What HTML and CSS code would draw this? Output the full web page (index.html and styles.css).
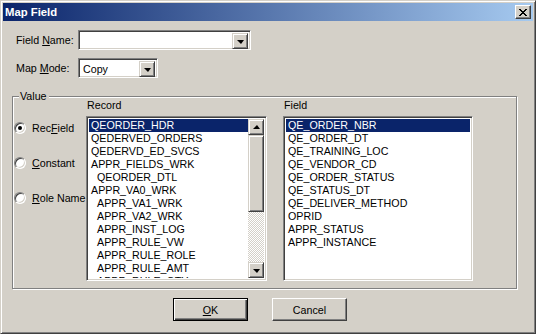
FILE: index.html
```html
<!DOCTYPE html>
<html lang="en">
<head>
  <meta charset="UTF-8">
  <title>Map Field</title>
  <link rel="stylesheet" href="styles.css">
</head>
<body>

  <div class="window">
    <div class="titlebar">
      <span class="title">Map Field</span>
      <button class="close">
        <svg width="8" height="7" viewBox="0 0 8 7" shape-rendering="crispEdges">
          <path d="M0 0h2v1h1v1h2v-1h1v-1h2v1h-1v1h-1v1h-1v1h1v1h1v1h1v1h-2v-1h-1v-1h-2v1h-1v1h-2v-1h1v-1h1v-1h1v-1h-1v-1h-1z" fill="#000"/>
        </svg>
      </button>
    </div>

    <div class="content">
      <div class="row">
        <label class="lbl">Field <u>N</u>ame:</label>
        <div class="combo combo-name">
          <span class="combo-text"></span>
          <span class="drop"><i class="arrow-down"></i></span>
        </div>
      </div>
      <div class="row">
        <label class="lbl">Map <u>M</u>ode:</label>
        <div class="combo combo-mode">
          <span class="combo-text">Copy</span>
          <span class="drop"><i class="arrow-down"></i></span>
        </div>
      </div>

      <div class="group">
        <span class="legend">Value</span>

        <div class="radios">
          <div class="radio checked"><span class="dot"></span><span>Rec<u>F</u>ield</span></div>
          <div class="radio"><span class="dot"></span><span><u>C</u>onstant</span></div>
          <div class="radio"><span class="dot"></span><span><u>R</u>ole Name</span></div>
        </div>

        <div class="col col-record">
          <div class="col-head">Record</div>
          <div class="listbox">
            <ul class="items">
              <li class="sel">QEORDER_HDR</li>
              <li>QEDERVED_ORDERS</li>
              <li>QEDERVD_ED_SVCS</li>
              <li>APPR_FIELDS_WRK</li>
              <li class="indent">QEORDER_DTL</li>
              <li>APPR_VA0_WRK</li>
              <li class="indent">APPR_VA1_WRK</li>
              <li class="indent">APPR_VA2_WRK</li>
              <li class="indent">APPR_INST_LOG</li>
              <li class="indent">APPR_RULE_VW</li>
              <li class="indent">APPR_RULE_ROLE</li>
              <li class="indent">APPR_RULE_AMT</li>
              <li class="indent">APPR_RULE_QTY</li>
            </ul>
            <div class="scrollbar">
              <span class="sb-btn"><i class="arrow-up"></i></span>
              <span class="thumb"></span>
              <span class="track"></span>
              <span class="sb-btn"><i class="arrow-down"></i></span>
            </div>
          </div>
        </div>

        <div class="col col-field">
          <div class="col-head">Field</div>
          <div class="listbox">
            <ul class="items">
              <li class="sel">QE_ORDER_NBR</li>
              <li>QE_ORDER_DT</li>
              <li>QE_TRAINING_LOC</li>
              <li>QE_VENDOR_CD</li>
              <li>QE_ORDER_STATUS</li>
              <li>QE_STATUS_DT</li>
              <li>QE_DELIVER_METHOD</li>
              <li>OPRID</li>
              <li>APPR_STATUS</li>
              <li>APPR_INSTANCE</li>
            </ul>
          </div>
        </div>
      </div>

      <div class="buttons">
        <button class="btn default"><u>O</u>K</button>
        <button class="btn">Cancel</button>
      </div>
    </div>
  </div>

</body>
</html>
```

FILE: styles.css
```css
body {
  margin: 0;
  font-family: 'Liberation Sans', Arial, sans-serif;
  font-size: 10.7px;
  color: #000;
  background-color: #d4d0c8;
}

.window {
  box-sizing: border-box;
  width: 536px;
  height: 334px;
  padding: 2px;
  background-color: #d4d0c8;
  border: 1px solid;
  border-color: #d4d0c8 #404040 #404040 #d4d0c8;
  box-shadow: inset 1px 1px #fff, inset -1px -1px #808080;
}

.titlebar {
  display: flex;
  align-items: center;
  justify-content: space-between;
  height: 18px;
  padding: 0 2px 0 2px;
  background: linear-gradient(to right, #0a246a, #a6caf0);
}

.title {
  color: #fff;
  font-weight: bold;
  font-size: 11.3px;
}

.close {
  box-sizing: border-box;
  width: 16px;
  height: 14px;
  padding: 0;
  display: flex;
  align-items: center;
  justify-content: center;
  background-color: #d4d0c8;
  border: 1px solid;
  border-color: #fff #404040 #404040 #fff;
  box-shadow: inset -1px -1px #808080;
}

.content {
  padding: 9px 0 0 9px;
}

.row {
  display: flex;
  align-items: center;
  height: 20px;
  margin-bottom: 8px;
  padding-left: 4px;
}

.lbl {
  width: 62px;
}

.combo,
.listbox {
  box-sizing: border-box;
  background-color: #fff;
  border: 1px solid;
  border-color: #808080 #fff #fff #808080;
  box-shadow: inset 1px 1px #404040, inset -1px -1px #d4d0c8;
}

.combo {
  display: flex;
  height: 20px;
  padding: 2px;
}

.combo-name { width: 173px; }
.combo-mode { width: 80px; }

.combo-text {
  flex: 1;
  padding-left: 2px;
  line-height: 16px;
}

.drop,
.sb-btn,
.thumb {
  box-sizing: border-box;
  display: flex;
  align-items: center;
  justify-content: center;
  width: 16px;
  height: 16px;
  background-color: #d4d0c8;
  border: 1px solid;
  border-color: #d4d0c8 #404040 #404040 #d4d0c8;
  box-shadow: inset 1px 1px #fff, inset -1px -1px #808080;
}

.arrow-down {
  width: 0;
  height: 0;
  border-left: 4px solid transparent;
  border-right: 3px solid transparent;
  border-top: 4px solid #000;
  margin-top: 1px;
}

.arrow-up {
  width: 0;
  height: 0;
  border-left: 4px solid transparent;
  border-right: 3px solid transparent;
  border-bottom: 4px solid #000;
  margin-bottom: 1px;
}

.group {
  position: relative;
  display: flex;
  box-sizing: border-box;
  width: 505px;
  height: 193px;
  margin-top: 18px;
  padding-top: 2px;
  border: 1px solid #808080;
  box-shadow: 1px 1px #fff, inset 1px 1px #fff;
}

.legend {
  position: absolute;
  top: -7px;
  left: 6px;
  padding: 0 2px 0 1px;
  line-height: 13px;
  background-color: #d4d0c8;
}

.radios {
  display: flex;
  flex-direction: column;
  gap: 23px;
  width: 72px;
  padding: 23px 0 0 1px;
}

.radio {
  display: flex;
  align-items: center;
  gap: 6px;
  height: 12px;
  white-space: nowrap;
}

.dot {
  box-sizing: border-box;
  display: flex;
  align-items: center;
  justify-content: center;
  width: 12px;
  height: 12px;
  border-radius: 50%;
  background-color: #fff;
  border: 1px solid;
  border-color: #808080 #fff #fff #808080;
  box-shadow: inset 1px 1px #404040, inset -1px -1px #d4d0c8;
}

.radio.checked .dot::after {
  content: "";
  width: 4px;
  height: 4px;
  border-radius: 50%;
  background-color: #000;
}

.col-record { width: 181px; }
.col-field { width: 190px; margin-left: 16px; }

.col-head {
  line-height: 13px;
  padding-left: 1px;
  margin-bottom: 4px;
}

.listbox {
  display: flex;
  height: 165px;
  padding: 2px;
  overflow: hidden;
}

.items {
  flex: 1;
  margin: 0;
  padding: 0;
  list-style: none;
  overflow: hidden;
}

.items li {
  height: 13px;
  line-height: 13px;
  padding-left: 2px;
  white-space: nowrap;
}

.items li.indent {
  padding-left: 8px;
}

.items li.sel {
  background-color: #0a246a;
  color: #fff;
}

.scrollbar {
  display: flex;
  flex-direction: column;
  width: 16px;
}

.thumb {
  height: 77px;
}

.track {
  flex: 1;
  background: repeating-conic-gradient(#d4d0c8 0 25%, #fff 0 50%) 0 0 / 2px 2px;
}

.buttons {
  display: flex;
  gap: 24px;
  margin-top: 9px;
  padding-left: 161px;
}

.btn {
  box-sizing: border-box;
  width: 75px;
  height: 23px;
  padding: 0;
  font-family: inherit;
  font-size: 10.7px;
  color: #000;
  background-color: #d4d0c8;
  border: 1px solid;
  border-color: #fff #404040 #404040 #fff;
  box-shadow: inset -1px -1px #808080, inset 1px 1px #d4d0c8;
}

.btn.default {
  border-color: #000;
  box-shadow: inset 1px 1px #fff, inset -1px -1px #404040, inset -2px -2px #808080;
}
```
